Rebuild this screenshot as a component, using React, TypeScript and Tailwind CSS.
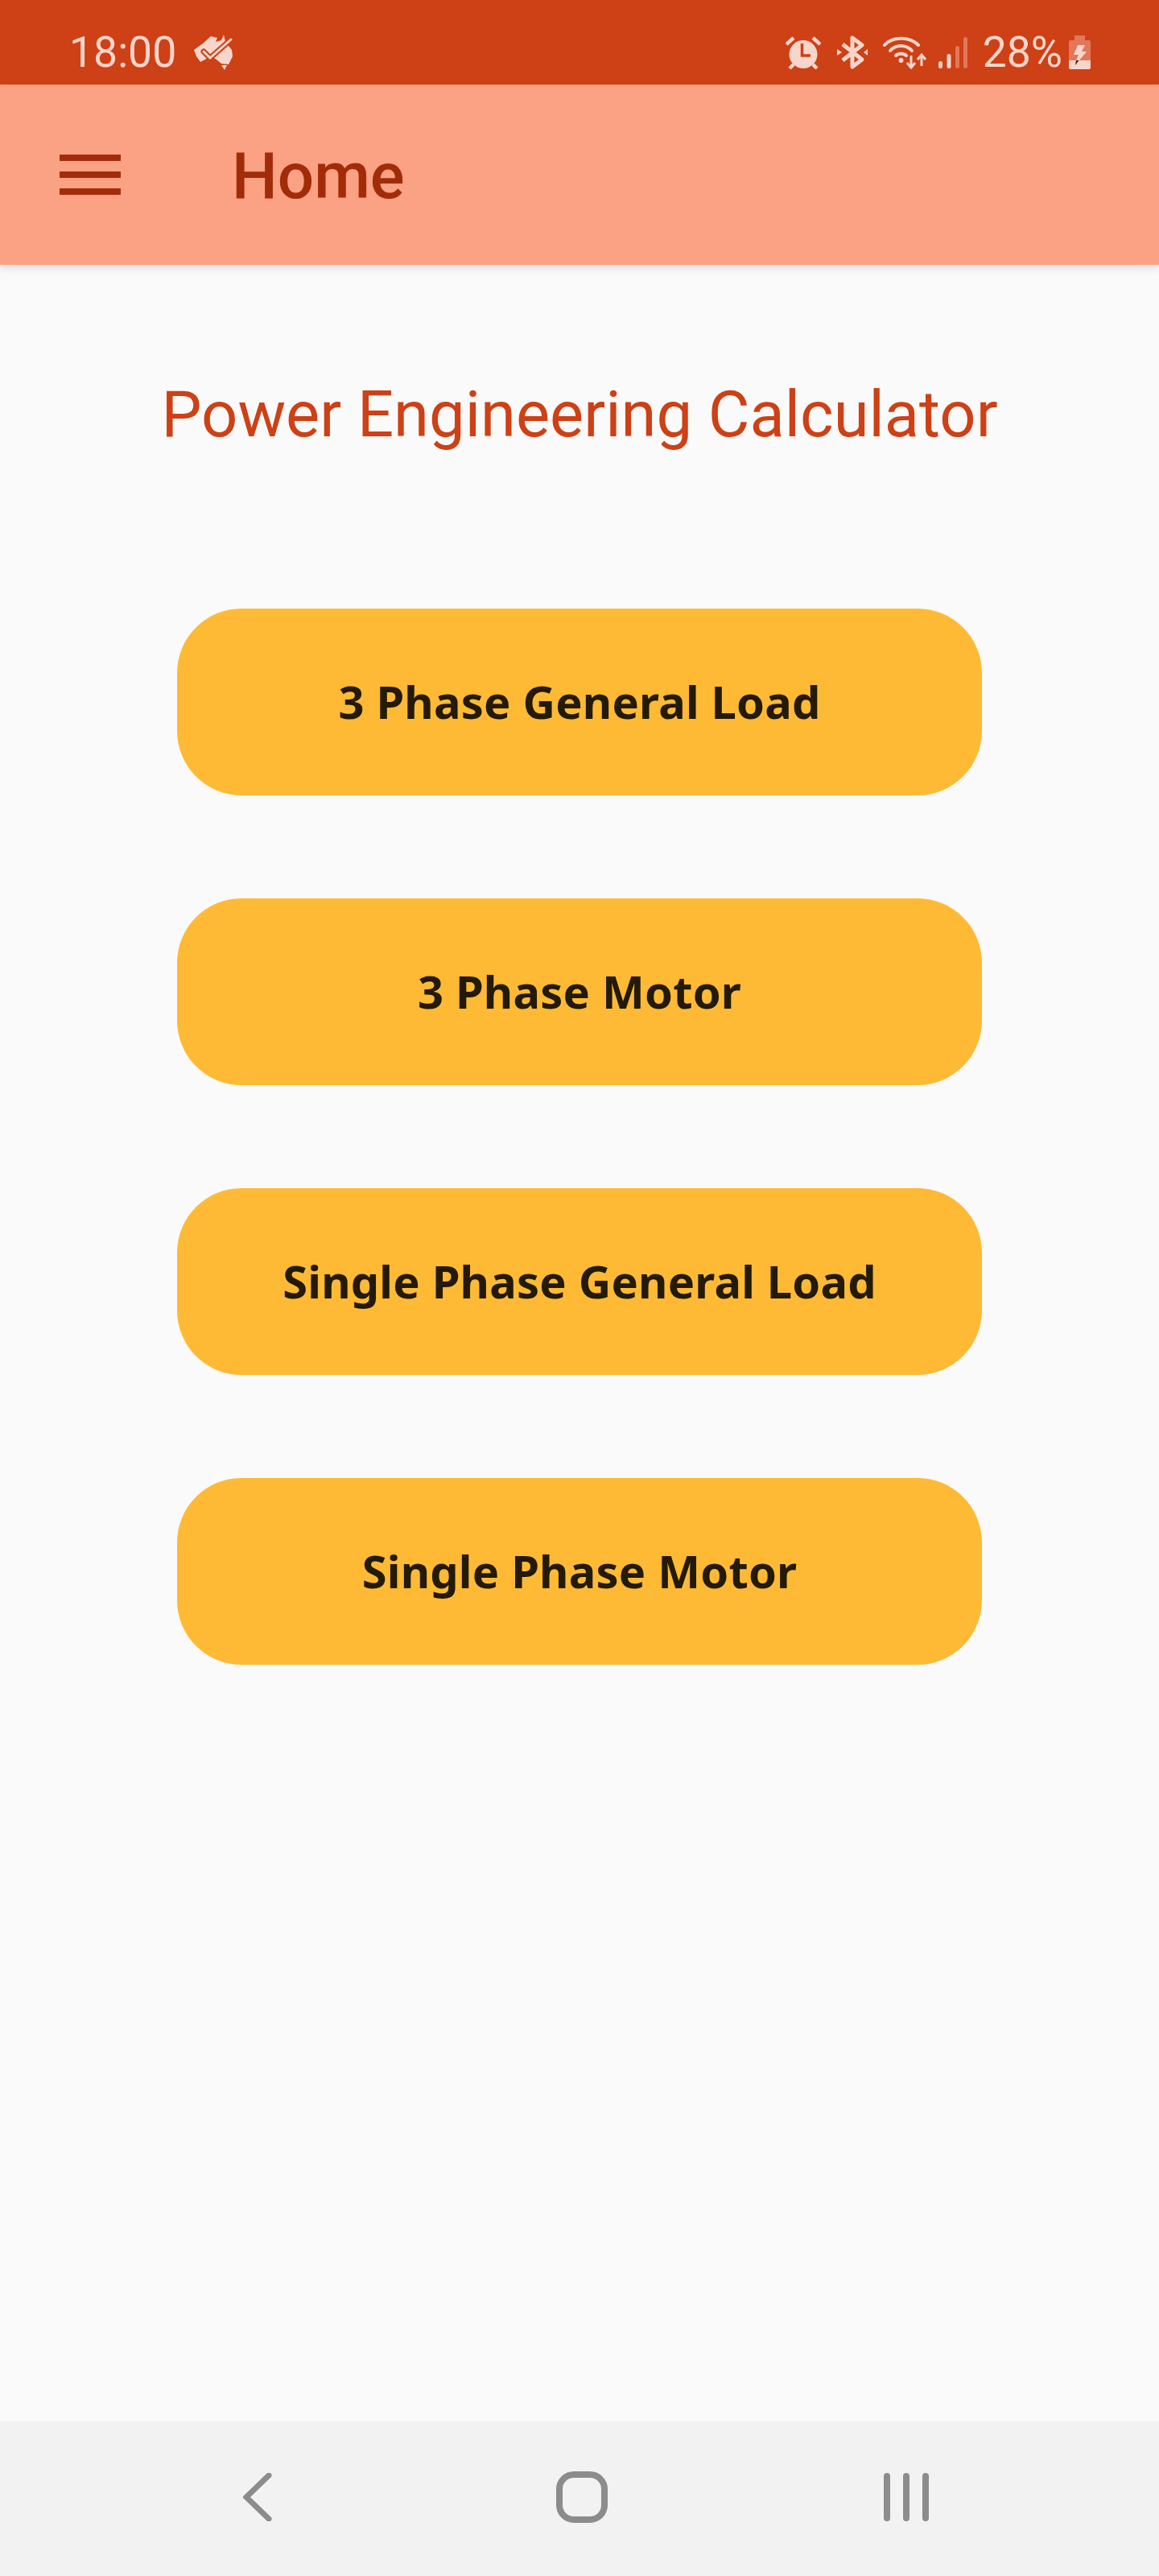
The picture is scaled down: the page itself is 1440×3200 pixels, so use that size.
const BTN = ["3 Phase General Load", "3 Phase Motor", "Single Phase General Load", "Single Phase Motor"];

function Australia() {
  return (
    <svg width="48" height="44" viewBox="0 0 48 44" className="shrink-0">
      <path fill="#f6d5cb" d="M0 19 L11 11 L21 2 L29 4 L27 9 L34 7 L37 0 L39 9 L47 19 L48 27 L43 37 L34 36 L28 31 L21 27 L8 34 L3 27 Z" />
      <path fill="#f6d5cb" d="M34 38 H41 L38 44 Z" />
      <path fill="none" stroke="#ce4015" strokeWidth="7" strokeLinecap="round" d="M12 21 L20 29 L46 6" />
      <path fill="none" stroke="#f6d5cb" strokeWidth="3" strokeLinecap="round" d="M12 21 L20 29 L46 6" />
    </svg>
  );
}

function Alarm() {
  return (
    <svg width="44" height="41" viewBox="0 0 44 41" className="shrink-0">
      <circle cx="22" cy="22.5" r="17.5" fill="#f6d5cb" />
      <path stroke="#f6d5cb" strokeWidth="4.5" d="M1 10 L10 2 M43 10 L34 2 M5 40 L10 35 M39 40 L34 35" />
      <path fill="none" stroke="#ce4015" strokeWidth="3.5" d="M20.5 9 V24 H31" />
    </svg>
  );
}

function Bluetooth() {
  return (
    <svg width="38" height="44" viewBox="0 0 38 44" className="shrink-0">
      <path fill="none" stroke="#f6d5cb" strokeWidth="5" strokeLinejoin="round" d="M7 12 L31 31 L19 40 V4 L31 13 L7 32" />
      <path fill="#f6d5cb" d="M0 18 L6 22 L0 26 Z M38 18 L33 22 L38 26 Z" />
    </svg>
  );
}

function Wifi() {
  return (
    <svg width="55" height="41" viewBox="0 0 55 41" className="shrink-0">
      <g fill="none" stroke="#f6d5cb" strokeWidth="4" strokeLinecap="round">
        <path d="M2 11 C12 0 33 0 44 11" />
        <path d="M9 18 C16 10 29 10 36 18" />
        <path d="M16 24 C19 21 26 21 29 24" />
      </g>
      <circle cx="22.5" cy="30" r="3" fill="#f6d5cb" />
      <path stroke="#f6d5cb" strokeWidth="3" fill="none" d="M35 24 V39 M30 33 L35 39 L40 33 M48 37 V24 M43 29 L48 23 L53 29" />
    </svg>
  );
}

function Signal() {
  return (
    <svg width="36" height="39" viewBox="0 0 36 39" className="shrink-0">
      <rect x="0" y="30" width="5" height="9" rx="2.5" fill="#f6d5cb" />
      <rect x="10.5" y="21" width="5" height="18" rx="2.5" fill="#f6d5cb" />
      <rect x="21" y="11" width="5" height="28" rx="2.5" fill="#e2775a" />
      <rect x="31" y="0" width="5" height="39" rx="2.5" fill="#e2775a" />
    </svg>
  );
}

function Battery() {
  return (
    <svg width="27" height="42" viewBox="0 0 27 42" className="shrink-0">
      <path fill="#e2775a" d="M7 0 H20 V6 H25 Q27 6 27 8 V31 H0 V8 Q0 6 2 6 H7 Z" />
      <path fill="#f6d5cb" d="M0 31 H27 V40 Q27 42 25 42 H2 Q0 42 0 40 Z" />
      <path fill="#f6d5cb" d="M11 12 H20 L16 20 H22 L13 31 H9 L12 24 H6 Z" />
      <path fill="#33201a" d="M9 31 H12.5 L8 37 Z" />
    </svg>
  );
}

export default function App() {
  return (
    <div className="flex h-[3200px] w-[1440px] flex-col bg-[#fafafa] font-['Roboto',sans-serif]">
      <div className="flex h-[105px] shrink-0 items-center justify-between bg-[#ce4015] pl-[86px] pr-[85px] pt-[25px] text-[#f6d5cb]">
        <div className="flex items-center gap-[22px]">
          <span className="text-[53.5px] leading-none">18:00</span>
          <Australia />
        </div>
        <div className="flex items-center">
          <Alarm />
          <div className="ml-[20px]"><Bluetooth /></div>
          <div className="ml-[19px]"><Wifi /></div>
          <div className="ml-[14px]"><Signal /></div>
          <span className="ml-[19px] text-[53.5px] leading-none">28%</span>
          <div className="ml-[8px]"><Battery /></div>
        </div>
      </div>
      <header className="flex h-[224px] shrink-0 items-center bg-[#fba285] pl-[74px] shadow-[0_4px_10px_rgba(0,0,0,0.12)]">
        <div className="flex w-[76px] flex-col gap-[13px]">
          <div className="h-[8px] bg-[#a32c08]" />
          <div className="h-[8px] bg-[#a32c08]" />
          <div className="h-[8px] bg-[#a32c08]" />
        </div>
        <h1 className="ml-[138px] pt-[4px] text-[80px] font-medium leading-none text-[#a32c08]">Home</h1>
      </header>
      <main className="flex flex-1 flex-col items-center pt-[141px]">
        <h2 className="text-[79.5px] leading-[90px] text-[#ce4015]">Power Engineering Calculator</h2>
        <div className="mt-[196px] flex w-[1000px] flex-col gap-[128px]">
          {BTN.map((b) => (
            <button key={b} className="flex h-[232px] items-center justify-center rounded-[80px] bg-[#ffba35] pb-[2px] font-['Noto_Sans',sans-serif] text-[56px] font-bold tracking-[0.2px] text-[#231a08]">
              {b}
            </button>
          ))}
        </div>
      </main>
      <nav className="flex h-[192px] shrink-0 items-center bg-[#f2f2f2] pb-[5px]">
        <svg width="36" height="60" viewBox="0 0 36 60" className="ml-[302px]">
          <path fill="none" stroke="#8c8c8c" strokeWidth="7" strokeLinecap="round" d="M32 3 L4 30 L32 57" />
        </svg>
        <div className="ml-[353px] h-[64px] w-[64px] rounded-[22px] border-[8px] border-[#8c8c8c]" />
        <div className="ml-[343px] flex gap-[16px]">
          <div className="h-[60px] w-[8px] rounded-full bg-[#8c8c8c]" />
          <div className="h-[60px] w-[8px] rounded-full bg-[#8c8c8c]" />
          <div className="h-[60px] w-[8px] rounded-full bg-[#8c8c8c]" />
        </div>
      </nav>
    </div>
  );
}
